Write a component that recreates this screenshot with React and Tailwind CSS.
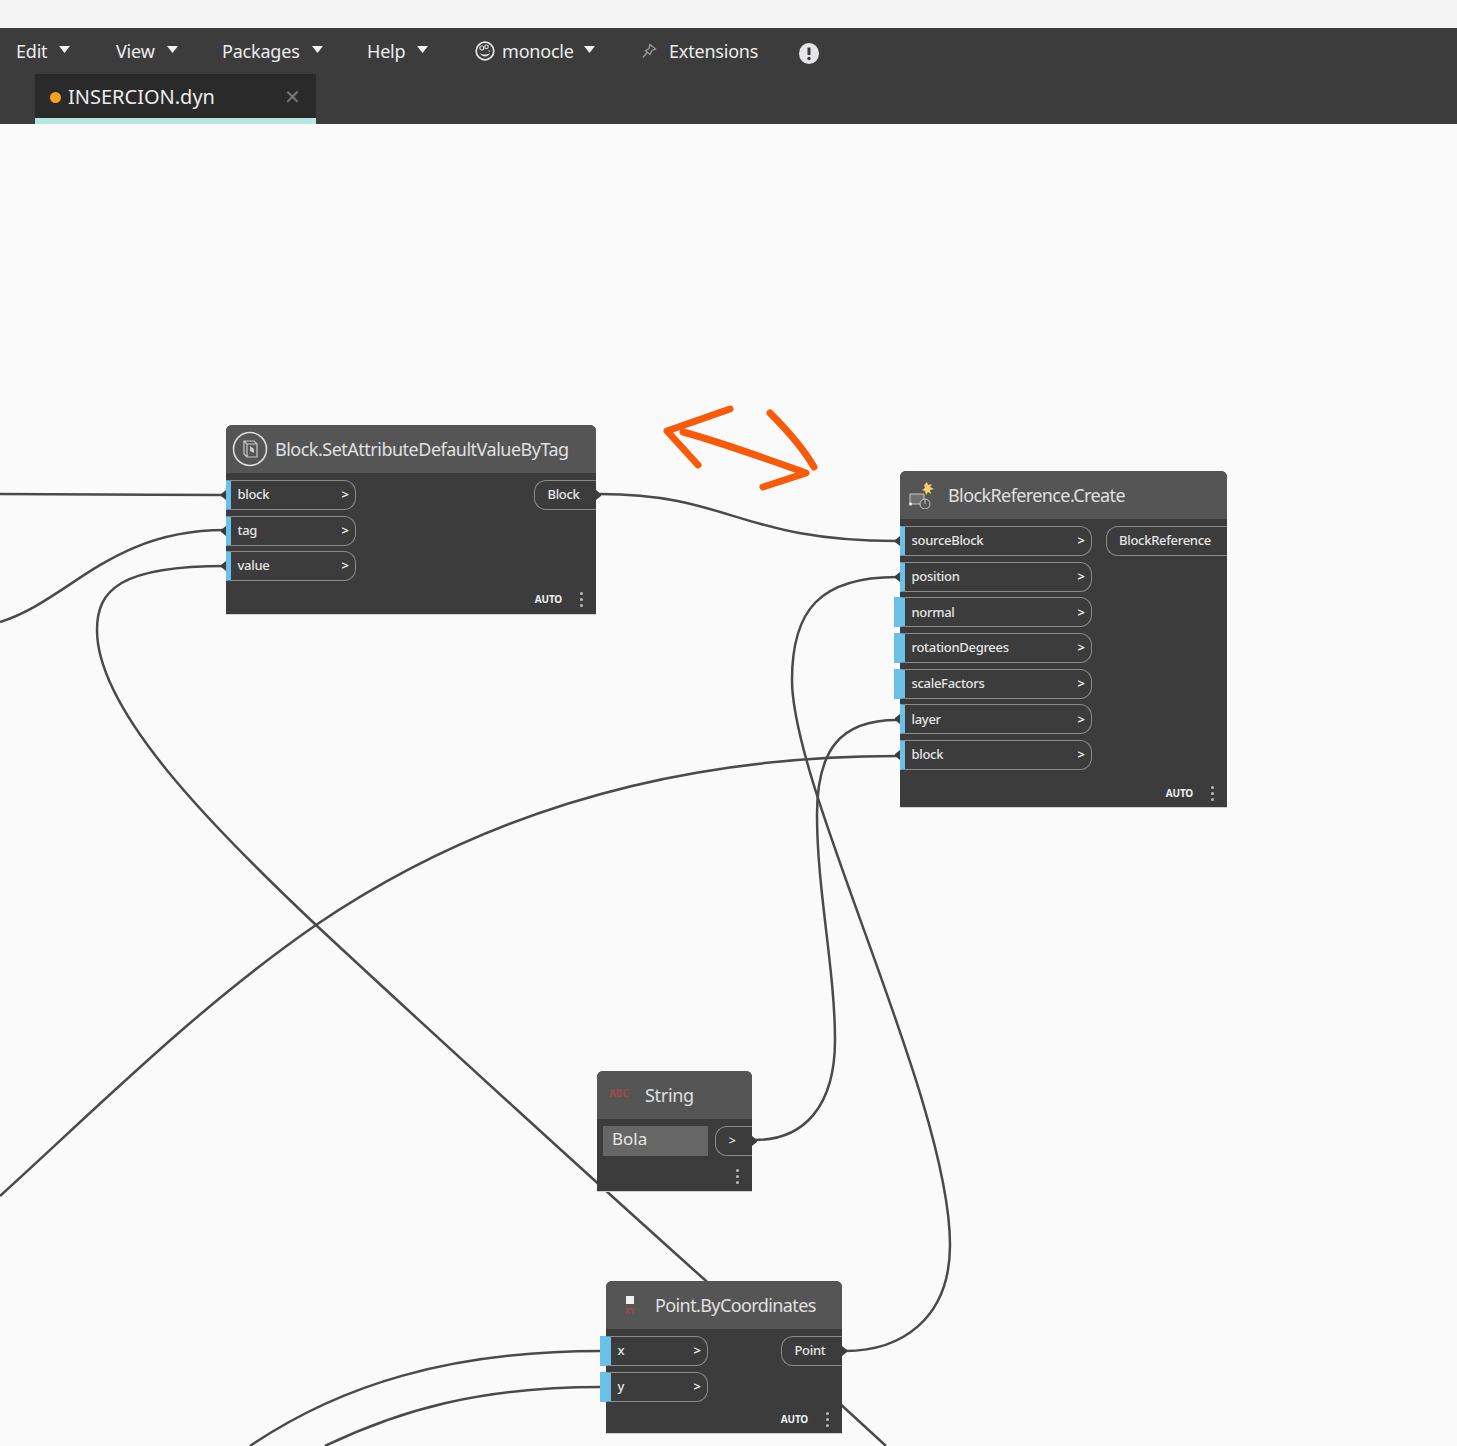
const FONT = 'font-["Noto_Sans","Liberation_Sans",sans-serif]';

const MENU = [
  { label: 'Edit', w: 'w-[116px]', pl: 'pl-4' },
  { label: 'View', w: 'w-[106px]', pl: 'pl-0' },
  { label: 'Packages', w: 'w-[145px]', pl: 'pl-0' },
  { label: 'Help', w: 'w-[108px]', pl: 'pl-0' },
];

const WIRES = [
  'M0 494 C80 494 150 495 225 495',
  'M0 622 C70 600 110 530 225 530',
  'M225 566 C120 566 97 590 97 630 C97 710 210 825 316 925 C420 1022 610 1195 705 1280 L886 1446',
  'M600 494 C730 494 740 541 897 541',
  'M897 577 C820 577 792 610 792 680 C792 790 950 1100 950 1245 C950 1320 900 1351 845 1351',
  'M897 720 C840 720 817 750 817 815 C817 890 835 970 835 1040 C835 1105 805 1140 755 1140',
  'M897 756 C700 756 500 800 316 925 C200 1005 100 1105 0 1196',
  'M601 1351 C450 1351 340 1385 250 1446',
  'M601 1387 C480 1387 400 1410 325 1446',
];

const Caret = () => (
  <svg width="11" height="8" viewBox="0 0 11 8" className="shrink-0 -mt-[3px]">
    <path d="M0 0 H11 L5.5 7 Z" fill="#f2f2f2" />
  </svg>
);

const Wedge = ({ flip, className }) => (
  <svg width="5" height="10" viewBox="0 0 5 10" className={className}>
    <path d={flip ? 'M0 0 V10 L5 6 V4 Z' : 'M5 0 V10 L0 6 V4 Z'} fill="#3c3c3c" />
  </svg>
);

function InPort({ label, wide }) {
  return (
    <div className="relative h-[30px] flex items-center">
      {wide && <div className="absolute -left-[6px] top-0 h-full w-[6px] bg-[#6ac0e7]" />}
      {!wide && <Wedge className="absolute -left-[5px] top-[10px]" />}
      <div className="w-full h-full flex items-center justify-between rounded-r-[12px] border border-l-[5px] border-[#8b8b8b] border-l-[#6ac0e7] bg-[#3c3c3c] pl-[6.5px] pr-[6px]">
        <span className="text-[13px] font-medium tracking-[-0.3px] text-[#e6e6e6]">{label}</span>
        <span className="text-[13px] font-bold text-[#e6e6e6]">&gt;</span>
      </div>
    </div>
  );
}

const OutPort = ({ label, edge = true }) => (
  <div className="relative h-[30px] flex items-center justify-center rounded-l-[12px] border border-r-0 border-[#8b8b8b] pr-[4px] text-[13px] font-medium tracking-[-0.3px] text-[#e6e6e6]">
    {label}
    {edge && <Wedge flip className="absolute -right-[5px] top-[9px]" />}
  </div>
);

const Dots = () => (
  <div className="flex flex-col gap-[3px]">
    <div className="size-[3px] rounded-full bg-[#bcbcbc]" />
    <div className="size-[3px] rounded-full bg-[#bcbcbc]" />
    <div className="size-[3px] rounded-full bg-[#bcbcbc]" />
  </div>
);

const Footer = ({ auto = true, pos = 'bottom-[6px]' }) => (
  <div className={`absolute right-[13px] flex items-center gap-[18px] ${pos}`}>
    {auto && <span className="text-[10px] font-bold tracking-[-0.2px] text-[#f0f0f0]">AUTO</span>}
    <Dots />
  </div>
);

const NodeHeader = ({ icon, title, gap, track }) => (
  <div className={`h-[48px] flex items-center rounded-t-[6px] bg-[#555555] text-[18px] text-[#e0e0e0] ${gap}`}>
    {icon}
    <span className={track}>{title}</span>
  </div>
);

export default function App() {
  return (
    <div className={`relative h-[1446px] overflow-hidden bg-[#fafafa] ${FONT}`}>
      <div className="h-[28px] bg-[#f3f3f3]" />
      <div className="h-[96px] bg-[#3c3c3c]">
        <div className="h-[46px] flex items-center text-[18px] tracking-[-0.2px] text-[#ececec]">
          {MENU.map((m) => (
            <div key={m.label} className={`flex items-center gap-3 ${m.w} ${m.pl}`}>
              <span>{m.label}</span>
              <Caret />
            </div>
          ))}
          <div className="flex items-center gap-[7px] w-[166px]">
            <svg width="20" height="20" viewBox="0 0 20 20">
              <circle cx="10" cy="10" r="8.8" fill="#3c3c3c" stroke="#e6e6e6" strokeWidth="1.7" />
              <circle cx="6.8" cy="7" r="2" fill="none" stroke="#d8d8d8" strokeWidth="1.2" />
              <circle cx="11.5" cy="5.8" r="1.8" fill="none" stroke="#d8d8d8" strokeWidth="1.2" />
              <path d="M13.5 9 L15.5 10 L14 11 Z" fill="#d8d8d8" />
              <path d="M5 12 C7 14 12 14 15 12 C13.5 16.5 6.5 16.5 5 12 Z" fill="#e6e6e6" />
            </svg>
            <span>monocle</span>
            <span className="ml-[3px] flex">
              <Caret />
            </span>
          </div>
          <div className="flex items-center gap-[12px] w-[158px]">
            <svg width="16" height="16" viewBox="0 0 16 16">
              <path d="M9 1.5 L14.5 6 L11 7.5 L9 11.5 L4.5 7.5 L8 5.5 Z M6 9.5 L2 14.5" fill="none" stroke="#9a9a9a" strokeWidth="1.3" />
            </svg>
            <span>Extensions</span>
          </div>
          <svg width="20" height="21" viewBox="0 0 20 21" className="mt-[5px]">
            <ellipse cx="10" cy="10.5" rx="10" ry="10.5" fill="#e6e6ea" />
            <path d="M10 4.5 V12" stroke="#3c3c3c" strokeWidth="3" />
            <circle cx="10" cy="15.5" r="1.7" fill="#3c3c3c" />
          </svg>
        </div>
        <div className="flex h-[50px] items-end">
          <div className="ml-[35px] w-[281px] h-[50px] flex items-center justify-between bg-[#2a2a2a] border-b-[6px] border-[#b5e8e3] pl-[15px] pr-[15px] pt-[2px]">
            <div className="flex items-center gap-[7px]">
              <div className="size-[11px] rounded-full bg-[#f79f1f]" />
              <span className="text-[20px] text-[#ececec]">INSERCION.dyn</span>
            </div>
            <span className="text-[20px] text-[#777777]">✕</span>
          </div>
        </div>
      </div>

      <svg className="absolute left-0 top-0" width="1457" height="1446" fill="none">
        {WIRES.map((d) => (
          <path key={d} d={d} stroke="#4a4a4a" strokeWidth="2.5" />
        ))}
        <g stroke="#f95a0a" strokeWidth="7" strokeLinecap="round" strokeLinejoin="round">
          <path d="M730 409 L667 431 L698 465" />
          <path d="M683 432 C720 442 770 460 806 473 L763 487" />
          <path d="M770 413 C785 428 803 448 814 467" />
        </g>
      </svg>

      {/* Block.SetAttributeDefaultValueByTag */}
      <div className="absolute left-[226px] top-[425px] w-[370px] h-[190px] rounded-t-[6px] bg-[#3c3c3c] border-b border-[#d0d0d0]">
        <NodeHeader
          title="Block.SetAttributeDefaultValueByTag"
          gap="pl-[6px] gap-[7px]"
          track="tracking-[-0.5px]"
          icon={
            <svg width="36" height="36" viewBox="0 0 36 36">
              <circle cx="18" cy="18" r="16.5" fill="none" stroke="#dcdcdc" strokeWidth="1.6" />
              <path d="M12 10 H22 L25 13 V26 H15 L12 23 Z M12 10 L15 13 H25 M15 13 V26" fill="none" stroke="#c8c8c8" strokeWidth="1.2" />
              <path d="M18 15 L22 18 V22 L18 20 Z" fill="#c8c8c8" />
            </svg>
          }
        />
        <div className="flex justify-between pt-[7px]">
          <div className="flex w-[130px] flex-col gap-[5.5px]">
            <InPort label="block" />
            <InPort label="tag" />
            <InPort label="value" />
          </div>
          <div className="w-[62px]">
            <OutPort label="Block" />
          </div>
        </div>
        <Footer pos="bottom-[7px]" />
      </div>

      {/* BlockReference.Create */}
      <div className="absolute left-[900px] top-[471px] w-[327px] h-[337px] rounded-t-[6px] bg-[#3c3c3c] border-b border-[#d0d0d0]">
        <NodeHeader
          title="BlockReference.Create"
          gap="pl-[9px] gap-[14px]"
          track="tracking-[-0.6px]"
          icon={
            <svg width="25" height="28" viewBox="0 0 25 28">
              <path d="M15 4 L18 1 L19 4 L23 3 L21 6 L25 8 L21 9 L22 13 L19 11 L17 14 L16 10 L13 9 L16 7 Z" fill="#f6d06a" />
              <path d="M1 13 H15 V23 H1 Z" fill="#707070" stroke="#c8c8c8" />
              <circle cx="16" cy="23" r="5" fill="#555555" stroke="#c8c8c8" />
              <path d="M16 18 V23" stroke="#c8c8c8" />
              <circle cx="1.5" cy="23" r="1.5" fill="#ffffff" />
            </svg>
          }
        />
        <div className="flex justify-between pt-[7px]">
          <div className="flex w-[192px] flex-col gap-[5.7px]">
            <InPort label="sourceBlock" />
            <InPort label="position" />
            <InPort label="normal" wide />
            <InPort label="rotationDegrees" wide />
            <InPort label="scaleFactors" wide />
            <InPort label="layer" />
            <InPort label="block" />
          </div>
          <div className="w-[121px]">
            <OutPort label="BlockReference" edge={false} />
          </div>
        </div>
        <Footer />
      </div>

      {/* String */}
      <div className="absolute left-[597px] top-[1071px] w-[155px] h-[121px] rounded-t-[6px] bg-[#3c3c3c] border-b border-[#d0d0d0]">
        <NodeHeader
          title="String"
          gap="pl-[12px] gap-[13px]"
          track="tracking-[-0.3px]"
          icon={<span className="w-[23px] -mt-[3px] text-[10px] font-bold tracking-[-0.2px] text-[#9b4a50]">ABC</span>}
        />
        <div className="flex justify-between pl-[6px] pt-[7px]">
          <div className="w-[105px] h-[30px] flex items-center bg-[#666666] pl-[9px] pb-[5px] text-[17px] text-[#e6e6e6]">Bola</div>
          <div className="w-[37px]">
            <OutPort label=">" />
          </div>
        </div>
        <Footer auto={false} pos="bottom-[7px]" />
      </div>

      {/* Point.ByCoordinates */}
      <div className="absolute left-[606px] top-[1281px] w-[236px] h-[153px] rounded-t-[6px] bg-[#3c3c3c] border-b border-[#d0d0d0]">
        <NodeHeader
          title="Point.ByCoordinates"
          gap="pl-[18px] gap-[19px]"
          track="tracking-[-0.6px]"
          icon={
            <div className="flex w-[12px] flex-col items-center gap-[2px]">
              <div className="size-[8px] bg-[#efefef]" />
              <span className="text-[8px] leading-[9px] font-bold text-[#9b4a50]">XY</span>
            </div>
          }
        />
        <div className="flex justify-between pt-[7px]">
          <div className="flex w-[102px] flex-col gap-[6px]">
            <InPort label="x" wide />
            <InPort label="y" wide />
          </div>
          <div className="w-[61px]">
            <OutPort label="Point" />
          </div>
        </div>
        <Footer />
      </div>
    </div>
  );
}
